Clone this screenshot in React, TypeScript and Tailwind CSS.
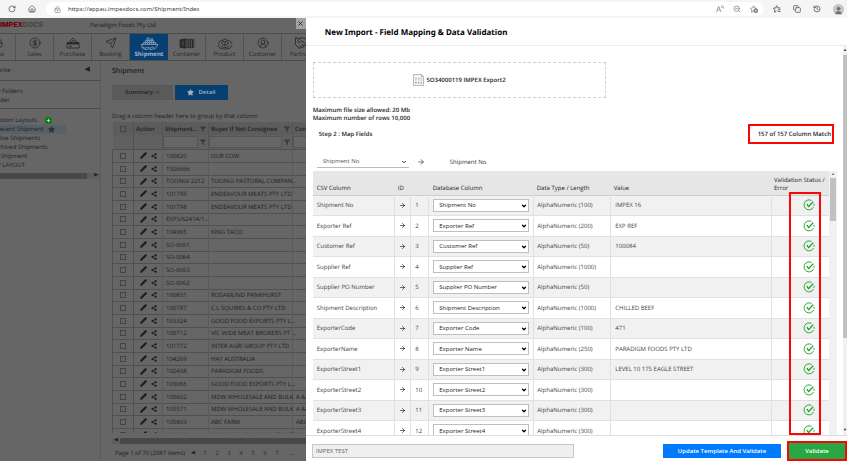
import type { ReactNode } from 'react';
import {
  ArrowRight,
  ChevronDown,
  CircleDollarSign,
  CircleUserRound,
  Copy,
  Filter,
  Handshake,
  History,
  House,
  Inbox,
  LockKeyhole,
  Pencil,
  Plus,
  RotateCw,
  Send,
  Share2,
  Star,
  User,
  X,
  ZoomOut,
} from 'lucide-react';

interface Mapping {
  csv: string;
  db: string;
  length: number;
  value?: string;
}

const mappings: Mapping[] = [
  { csv: 'Shipment No', db: 'Shipment No', length: 100, value: 'IMPEX 16' },
  { csv: 'Exporter Ref', db: 'Exporter Ref', length: 200, value: 'EXP REF' },
  { csv: 'Customer Ref', db: 'Customer Ref', length: 50, value: '100084' },
  { csv: 'Supplier Ref', db: 'Supplier Ref', length: 1000 },
  { csv: 'Supplier PO Number', db: 'Supplier PO Number', length: 50 },
  { csv: 'Shipment Description', db: 'Shipment Description', length: 1000, value: 'CHILLED BEEF' },
  { csv: 'ExporterCode', db: 'Exporter Code', length: 100, value: '471' },
  { csv: 'ExporterName', db: 'Exporter Name', length: 250, value: 'PARADIGM FOODS PTY LTD' },
  { csv: 'ExporterStreet1', db: 'Exporter Street1', length: 300, value: 'LEVEL 10 175 EAGLE STREET' },
  { csv: 'ExporterStreet2', db: 'Exporter Street2', length: 300 },
  { csv: 'ExporterStreet3', db: 'Exporter Street3', length: 300 },
  { csv: 'ExporterStreet4', db: 'Exporter Street4', length: 300 },
];

const shipments = [
  ['100820', 'OUR COW', ''],
  ['1506666', '', ''],
  ['TOONGI 2212', 'TOONGI PASTORAL COMPAN...', ''],
  ['101795', 'ENDEAVOUR MEATS PTY LTD', ''],
  ['101798', 'ENDEAVOUR MEATS PTY LTD', ''],
  ['EXPS/62414/1...', '', ''],
  ['104965', 'KING TACO', ''],
  ['SO-0061', '', ''],
  ['SO-0064', '', ''],
  ['SO-0063', '', ''],
  ['SO-0062', '', ''],
  ['100831', 'ROSAMUND PANKHURST', ''],
  ['100787', 'C.L SQUIRES & CO PTY LTD', ''],
  ['103324', 'GOOD FOOD EXPORTS PTY L...', ''],
  ['100712', 'VIC WIDE MEAT BROKERS PT ...', ''],
  ['101772', 'INTER AGRI GROUP PTY LTD', ''],
  ['104269', 'HAY AUSTRALIA', ''],
  ['102438', 'PARADIGM FOODS', ''],
  ['103066', 'GOOD FOOD EXPORTS PTY L...', ''],
  ['105602', 'MDW WHOLESALE AND BULK', 'A &'],
  ['105571', 'MDW WHOLESALE AND BULK', 'A &'],
  ['105803', 'ABC FARM', 'ABC'],
  ['103332', 'ADAMS FOOD GROUP PTY LTD', 'ADA'],
];

function ReadAloudIcon() {
  return (
    <svg viewBox="0 0 16 16" className="h-2 w-2" fill="none" stroke="currentColor" strokeWidth="1.3">
      <path d="M1 14 5.500 3 10 14M2.800 10h5.500M10 2q2 1.500 2 4M12.500 1q2.500 2 2.500 6" />
    </svg>
  );
}

function AddFavouriteIcon() {
  return (
    <svg viewBox="0 0 16 16" className="h-2 w-2" fill="none" stroke="currentColor" strokeWidth="1.300">
      <path d="M7 12.500 3 14.500l.800-4.700L.800 6.500l4.500-.600L7.300 1.500l2 4.400 4.500.600" />
      <circle cx="11.500" cy="11.500" r="4" fill="currentColor" />
      <path d="M11.500 9.500v4M9.500 11.500h4" stroke="white" />
    </svg>
  );
}

function FavouritesIcon() {
  return (
    <svg viewBox="0 0 16 16" className="h-2 w-2" fill="none" stroke="currentColor" strokeWidth="1.500">
      <path d="M7 12 3 14.500l.800-4.700L.800 6.500l4.500-.600L7.300 1.500l2 4.400H15M9.500 9.500H15M9.500 13H15" />
    </svg>
  );
}

function ShipIcon() {
  return (
    <svg viewBox="0 0 20 14" className="h-[13px] w-5" fill="none" stroke="currentColor" strokeWidth="0.8">
      <path d="M8 4V1h2v3M12 4V2h2v2M6 6V4h9v2M4 8V6h13v2M1.500 8h18l-1.500 3M1.500 8l1.500 3" />
      <path d="M6 7h9M8 5h5" strokeDasharray="1 1" />
      <path d="M2 11.500q1.300-1.200 2.600 0t2.600 0 2.600 0 2.600 0 2.600 0 2.600 0M3 13.200q1.300-1.200 2.600 0t2.600 0 2.600 0 2.600 0 2.600 0" />
    </svg>
  );
}

function PurchaseIcon() {
  return (
    <svg viewBox="0 0 14 12" className="h-3 w-3.5" fill="none" stroke="currentColor" strokeWidth="0.8">
      <path d="M1 5.500h12V11H1zM1 7h12M2.500 5.500 7 1l4.500 4.500M5 5l2-2 2 2M3 9.300h3" />
      <path d="M1 6.300h12" strokeWidth="1.200" />
    </svg>
  );
}

function ContainerIcon() {
  return (
    <svg viewBox="0 0 16 12" className="h-[11px] w-4" fill="none" stroke="currentColor">
      <path d="M.5 2 6 1v10l-5.500-1z" fill="currentColor" />
      <path d="M6 1.500h9.500v9H6" strokeWidth="0.8" />
      <path d="M8 2v8M10 2v8M12 2v8M14 2v8" strokeWidth="1.200" />
      <path d="M2.500 3v6M4.300 2.800v6.400" stroke="#666" strokeWidth="0.5" />
    </svg>
  );
}

function ProductIcon() {
  return (
    <svg viewBox="0 0 16 13" className="h-[13px] w-4" fill="none" stroke="currentColor" strokeWidth="0.8">
      <path d="m8 2 3 1.500v3.500L8 8.500 5 7V3.500zM5 3.500 8 5l3-1.500M8 5v3.500" />
      <path d="M4 3C2.500 4 1.500 5.500 2 7.500M12 3c1.500 1 2.500 2.500 2 4.500" />
      <path d="M1 8c0 2.500 3 4 7 4s7-1.500 7-4M3.500 8.500C4 10 6 10.500 8 10.500s4-.5 4.500-2" />
    </svg>
  );
}

function CsvIcon() {
  return (
    <svg viewBox="0 0 11 12" className="h-3 w-[11px]" fill="none" stroke="#a3a9ae" strokeWidth="0.8">
      <path d="M.5.500h8l2 2v9H.500zM8.500.500v2h2" fill="#f5f6f7" />
      <path d="M2 4.300h2M4.700 4.300h1.800M7.300 4.300H9M2 6h1.500M5 6h1.500M7.500 6H9" />
      <path d="M2 8.800h1.500M4.700 8.800h1.500M7.500 8.800H9" stroke="#4b5563" />
    </svg>
  );
}

function ValidIcon() {
  return (
    <svg viewBox="0 0 12 12" className="h-3 w-3" fill="none" stroke="#12a018" role="img" aria-label="Valid">
      <path d="M8.500 1.500A5 5 0 1 0 10.600 8M11 6.800V4.800" strokeWidth="0.9" />
      <path d="M3.800 5.200 5.700 7.600 10.200 2.600" strokeWidth="1.300" />
    </svg>
  );
}

const navItems: { label: string; icon: ReactNode }[] = [
  { label: 'Inbox', icon: <Inbox className="h-3 w-3" strokeWidth={1.5} /> },
  { label: 'Sales', icon: <CircleDollarSign className="h-3 w-3" strokeWidth={1.5} /> },
  { label: 'Purchase', icon: <PurchaseIcon /> },
  { label: 'Booking', icon: <Send className="h-3 w-3" strokeWidth={1.5} /> },
  { label: 'Shipment', icon: <ShipIcon /> },
  { label: 'Container', icon: <ContainerIcon /> },
  { label: 'Product', icon: <ProductIcon /> },
  { label: 'Customer', icon: <CircleUserRound className="h-3 w-3" strokeWidth={1.5} /> },
  { label: 'Partner', icon: <Handshake className="h-3.5 w-4" strokeWidth={1.5} /> },
];

function BrowserBar() {
  return (
    <header className="flex h-[18px] shrink-0 items-center bg-[#f5f5f5] text-gray-700">
      <button aria-label="Reload" className="ml-2 w-5">
        <RotateCw className="h-2 w-2" />
      </button>
      <button aria-label="Home" className="w-[18px]">
        <House className="h-2 w-2" />
      </button>
      <div className="flex h-3.5 flex-1 items-center rounded-full bg-white pr-1.5 pl-2">
        <LockKeyhole className="h-[7px] w-[7px] text-gray-500" />
        <input
          aria-label="Address"
          defaultValue="https://appau.impexdocs.com/Shipment/Index"
          className="ml-[7px] min-w-0 flex-1 font-['Noto_Sans',sans-serif] text-[6px] leading-[10px] text-gray-700"
        />
        <div className="flex items-center gap-[9px] text-gray-500">
          <ReadAloudIcon />
          <ZoomOut className="h-2 w-2" />
          <AddFavouriteIcon />
        </div>
      </div>
      <div className="flex items-center gap-3 pr-[3px] pl-[9px]">
        <FavouritesIcon />
        <Copy className="h-2 w-2" />
        <History className="h-2 w-2" />
        <span className="flex h-[11px] w-[11px] items-end justify-center rounded-full bg-[#c8c6c4]">
          <User className="h-[9px] w-[9px] fill-current text-gray-500" />
        </span>
      </div>
    </header>
  );
}

function Sidebar() {
  return (
    <aside className="w-[101px] shrink-0 overflow-hidden border-r border-[#5a5a5a] text-[6px] whitespace-nowrap">
      <div className="flex h-5 items-center justify-between border-b border-[#4c4c4c] pr-2.5">
        <span className="-ml-3">Favorite</span>
        <span className="text-[7px]">◀</span>
      </div>
      <div className="-ml-2 h-7 border-b border-[#4c4c4c] pt-1.5 leading-[9px]">
        <p>My Folders</p>
        <p>Folder</p>
      </div>
      <ul className="-ml-2 pt-[7px] leading-[9px]">
        <li className="flex items-center">
          Custom Layouts
          <span className="ml-2 flex h-[7px] w-[7px] items-center justify-center rounded-full bg-[#087a0a] text-white/60">
            <Plus className="h-[5px] w-[5px]" strokeWidth={5} />
          </span>
        </li>
        <li className="mr-[34px] flex items-center bg-[#586068] pl-1 text-[#182330]">
          Recent Shipment
          <Star className="ml-1 h-[7px] w-[7px] fill-[#333] text-[#333]" />
        </li>
        <li>Active Shipments</li>
        <li>Archived Shipments</li>
        <li>All Shipment</li>
        <li>MY LAYOUT</li>
      </ul>
      <div className="mt-[3px] flex h-1.5 items-center justify-between bg-[#5e5e5e] pr-0.5">
        <div className="h-full w-[87px] bg-[#484848]" />
        <span className="text-[5px]">▶</span>
      </div>
    </aside>
  );
}

function ShipmentGrid() {
  return (
    <div className="min-h-0 flex-1 overflow-hidden">
      <table className="w-[240px] table-fixed border-collapse text-left text-[6px] leading-[8px] whitespace-nowrap">
        <colgroup>
          <col className="w-[21px]" />
          <col className="w-[29px]" />
          <col className="w-[46px]" />
          <col className="w-[84px]" />
          <col />
        </colgroup>
        <thead>
          <tr className="h-[13px] bg-[#5c5c5c]">
            <th className="border-r border-[#505050] pl-[7px]">
              <input type="checkbox" aria-label="Select all" className="block h-1.5 w-1.5 appearance-none border border-[#444]" />
            </th>
            <th className="pl-0.5 font-semibold">Action</th>
            <th className="border-x border-[#555] pl-0.5 font-semibold">
              <span className="flex items-center justify-between pr-0.5">
                Shipment... <Filter className="h-1.5 w-1.5 fill-[#3c3c3c] text-[#3c3c3c]" />
              </span>
            </th>
            <th className="pl-0.5 font-semibold">
              <span className="flex items-center justify-between pr-0.5">
                Buyer If Not Consignee <Filter className="h-1.5 w-1.5 fill-[#3c3c3c] text-[#3c3c3c]" />
              </span>
            </th>
            <th className="border-l border-[#555] pl-0.5 font-semibold">Con</th>
          </tr>
          <tr className="h-3.5 border-b border-[#505050] bg-[#606060]">
            <td className="border-r border-[#505050]" />
            <td />
            {['Shipment', 'Buyer', 'Consignee'].map((name) => (
              <td key={name} className="border-l border-[#555]">
                <div className="flex items-center gap-0.5 pr-0.5">
                  <input aria-label={`Filter ${name}`} className="h-3 min-w-0 flex-1 border border-[#555] bg-[#666]" />
                  <Filter className="h-1.5 w-1.5 fill-[#3c3c3c] text-[#3c3c3c]" />
                </div>
              </td>
            ))}
          </tr>
        </thead>
        <tbody>
          {shipments.map(([no, buyer, consignee]) => (
            <tr key={no} className="h-[13px] border-b border-[#505050] nth-[3n]:h-3">
              <td className="border-x border-[#505050] pl-[7px]">
                <input type="checkbox" aria-label={`Select ${no}`} className="block h-1.5 w-1.5 appearance-none border border-[#444]" />
              </td>
              <td>
                <div className="flex items-center gap-1 pl-1.5">
                  <Pencil className="h-[7px] w-[7px] fill-[#1f1f1f]" strokeWidth={3} />
                  <Share2 className="h-1.5 w-1.5 fill-[#2f2f2f]" strokeWidth={3} />
                </div>
              </td>
              <td className="border-x border-[#5a5a5a] pl-[3px]">{no}</td>
              <td className="pl-0.5">{buyer}</td>
              <td className="border-l border-[#5a5a5a] pl-[3px]">{consignee}</td>
            </tr>
          ))}
        </tbody>
      </table>
    </div>
  );
}

function ShipmentPage() {
  return (
    <div className="relative flex basis-[36.1%] flex-col overflow-hidden bg-[#666] text-[#202020]">
      <div className="flex h-[15px] shrink-0 items-center">
        <span className="w-[90px] font-['Inter',sans-serif] text-[7px] font-extrabold text-[#444]">
          <span className="text-[#720008]">IMPEX</span>DOCS
        </span>
        <span className="text-[6px]">Paradigm Foods Pty Ltd</span>
      </div>
      <nav className="-ml-[22px] flex h-7 shrink-0 border-y border-[#4c4c4c]">
        {navItems.map(({ label, icon }) => (
          <a
            key={label}
            href="#"
            className={
              label === 'Shipment'
                ? 'flex w-[38px] shrink-0 flex-col items-center justify-between bg-[#073f70] pt-0.5 pb-px text-[6px] leading-[9px] font-bold text-[#a3b4c4]'
                : 'flex w-[38px] shrink-0 flex-col items-center justify-between border-r border-[#525252] pt-0.5 pb-px text-[6px] leading-[9px] text-[#262626]'
            }
          >
            <span className="flex h-3.5 items-center">{icon}</span>
            {label}
          </a>
        ))}
      </nav>
      <div className="flex min-h-0 flex-1">
        <Sidebar />
        <main className="flex min-w-0 flex-1 flex-col pl-[11px]">
          <h1 className="pt-1 text-[7px] leading-[14px] font-semibold">Shipment</h1>
          <div className="mt-1.5 flex gap-0.5 text-[6px] font-semibold">
            <button className="flex h-[15px] w-[61px] items-center justify-center gap-0.5 bg-[#5a5a5a]">
              Summary <ChevronDown className="h-[5px] w-[5px]" strokeWidth={4} />
            </button>
            <button className="flex h-[15px] w-[53px] items-center justify-center gap-1 bg-[#073f70] text-[#a3b4c4]">
              <Star className="h-[7px] w-[7px] fill-current" /> Detail
            </button>
          </div>
          <p className="mt-3 pb-px text-[6px] leading-[9px] whitespace-nowrap">
            Drag a column header here to group by that column
          </p>
          <ShipmentGrid />
          <div className="mt-[5px] flex h-1.5 shrink-0 items-center bg-[#5e5e5e]">
            <span className="w-2 text-center text-[5px]">◀</span>
            <div className="h-full flex-1 bg-[#484848]" />
          </div>
          <div className="flex h-[17px] shrink-0 items-center pt-0.5 pl-[3px] text-[6px] whitespace-nowrap">
            Page 1 of 70 (2087 items)
            <span className="ml-1.5 text-[5px]">◀</span>
            <div className="ml-1 flex text-[#0d3458]">
              <span className="w-3 text-center text-[#202020]">1</span>
              {[2, 3, 4, 5, 6, 7].map((page) => (
                <a key={page} href="#" className="w-3 text-center">{page}</a>
              ))}
              <span className="w-5 text-center text-[#202020]">...</span>
            </div>
          </div>
        </main>
      </div>
      <button aria-label="Close" className="absolute top-0 right-0 flex h-[11px] w-[10px] items-center justify-center bg-[#a3a3a3] text-[#222]">
        <X className="h-[7px] w-[7px]" strokeWidth={3} />
      </button>
    </div>
  );
}

function MappingTable() {
  return (
    <div className="relative flex min-h-0 flex-1 overflow-hidden">
      <div className="min-w-0 flex-1 overflow-hidden">
        <table className="w-full table-fixed border-collapse text-left whitespace-nowrap">
          <colgroup>
            <col className="w-[82px]" />
            <col className="w-4" />
            <col className="w-[18px]" />
            <col className="w-[105px]" />
            <col className="w-[77px]" />
            <col />
            <col className="w-[58px]" />
          </colgroup>
          <thead>
            <tr className="h-6 border-b border-[#cfcfcf] bg-[#e6e6e6] align-bottom text-[#222]">
              <th className="pb-[3px] pl-1 font-medium">CSV Column</th>
              <th colSpan={2} className="pb-[3px] pl-[3px] font-medium">ID</th>
              <th className="pb-[3px] pl-1 font-medium">Database Column</th>
              <th className="pb-[3px] pl-[3px] font-medium">Data Type / Length</th>
              <th className="pb-[3px] pl-[3px] font-medium">Value</th>
              <th className="pb-[3px] pl-[3px] font-medium">
                Validation Status /<br />Error
              </th>
            </tr>
          </thead>
          <tbody className="text-[#444]">
            {mappings.map((row, index) => (
              <tr key={row.csv} className="h-5 border-b border-[#dee2e6] odd:bg-[#f1f1f1] even:h-[21px]">
                <td className="border-r border-[#dee2e6] pl-1">{row.csv}</td>
                <td className="border-r border-[#dee2e6]">
                  <ArrowRight className="mx-auto h-[7px] w-[7px] text-black" />
                </td>
                <td className="border-r border-[#dee2e6] pl-1">{index + 1}</td>
                <td className="border-r border-[#dee2e6] px-1">
                  <div className="relative">
                    <select
                      aria-label={`Database column for ${row.csv}`}
                      className="block h-[13px] w-full appearance-none border border-[#bfbfbf] bg-white pl-[5px] text-[#222]"
                    >
                      <option>{row.db}</option>
                    </select>
                    <ChevronDown className="pointer-events-none absolute top-1 right-0.5 h-1.5 w-1.5 text-black" strokeWidth={5} />
                  </div>
                </td>
                <td className="border-r border-[#dee2e6] pl-[3px]">AlphaNumeric ({row.length})</td>
                <td className="border-r border-[#dee2e6] pl-1">{row.value}</td>
                <td className="pl-[31px]">
                  <ValidIcon />
                </td>
              </tr>
            ))}
          </tbody>
        </table>
      </div>
      <div className="flex w-2 flex-col items-center bg-[#f1f1f1]">
        <span className="h-[7px] text-[4px] leading-[8px] text-gray-500">▲</span>
        <div className="h-[43px] w-1.5 bg-[#c1c1c1]" />
      </div>
      <div className="absolute top-[21px] right-4 bottom-0 w-8 border-2 border-[#f90606]" />
    </div>
  );
}

function ImportDialog() {
  return (
    <section className="flex min-w-0 flex-1 flex-col bg-white text-[6px] leading-[8px] text-[#222]">
      <h2 className="flex h-7 shrink-0 items-center border-b border-[#ececec] pt-0.5 pl-[19px] font-['Noto_Sans',sans-serif] text-[8px] font-bold text-black">
        New Import - Field Mapping &amp; Data Validation
      </h2>
      <div className="flex min-h-0 flex-1">
        <div className="flex min-w-0 flex-1 flex-col pr-1.5 pl-[7px]">
          <div className="mt-4 flex h-9 w-[56%] shrink-0 items-center justify-center gap-0.5 border border-dashed border-[#d0d0d0] font-semibold">
            <CsvIcon />
            SO34000119 IMPEX Export2
          </div>
          <div className="mt-2 font-semibold">
            <p>Maximum file size allowed: 20 Mb</p>
            <p>Maximum number of rows 10,000</p>
          </div>
          <div className="mt-0.5 flex items-center justify-between pr-[3px] pl-1.5 font-semibold">
            <h3>Step 2 : Map Fields</h3>
            <p className="flex h-5 w-[86px] items-center justify-end border-2 border-[#f90606] pr-px">
              157 of 157 Column Match
            </p>
          </div>
          <div className="mt-[11px] mb-[3px] flex items-center pl-1 text-[#333]">
            <div className="relative w-[92px]">
              <select
                aria-label="CSV column"
                className="block h-[13px] w-full appearance-none border-b border-[#b5bcc4] bg-white pl-1.5 text-[#555]"
              >
                <option>Shipment No</option>
              </select>
              <ChevronDown className="pointer-events-none absolute top-1 right-0.5 h-1.5 w-1.5 text-[#333]" strokeWidth={4} />
            </div>
            <ArrowRight className="mr-[25px] ml-2 h-2 w-2" />
            Shipment No
          </div>
          <MappingTable />
        </div>
        <div className="flex w-1 shrink-0 flex-col items-center bg-[#f1f1f1]">
          <span className="h-[9px] text-[4px] leading-[9px]">▲</span>
          <div className="h-[283px] w-full bg-[#c1c1c1]" />
          <span className="mt-auto text-[4px]">▼</span>
        </div>
      </div>
      <footer className="flex h-[26px] shrink-0 items-center justify-between border-t border-[#dedede] pt-1 pl-1.5">
        <input
          aria-label="Template name"
          defaultValue="IMPEX TEST"
          readOnly
          className="h-3.5 w-[49%] border border-[#c6c6c6] bg-[#efefef] pl-[3px] text-[#666]"
        />
        <div className="flex items-center gap-1.5 text-white">
          <button className="h-3.5 w-[118px] bg-[#007bff] font-semibold">Update Template And Validate</button>
          <div className="flex border-2 border-[#f90606]">
            <button className="h-4 w-14 bg-[#28a745] font-semibold">Validate</button>
          </div>
        </div>
      </footer>
    </section>
  );
}

export default function App() {
  return (
    <div className="flex h-screen flex-col overflow-hidden font-['Open_Sans',sans-serif] [text-rendering:geometricPrecision]">
      <BrowserBar />
      <div className="flex min-h-0 flex-1">
        <ShipmentPage />
        <ImportDialog />
      </div>
    </div>
  );
}
